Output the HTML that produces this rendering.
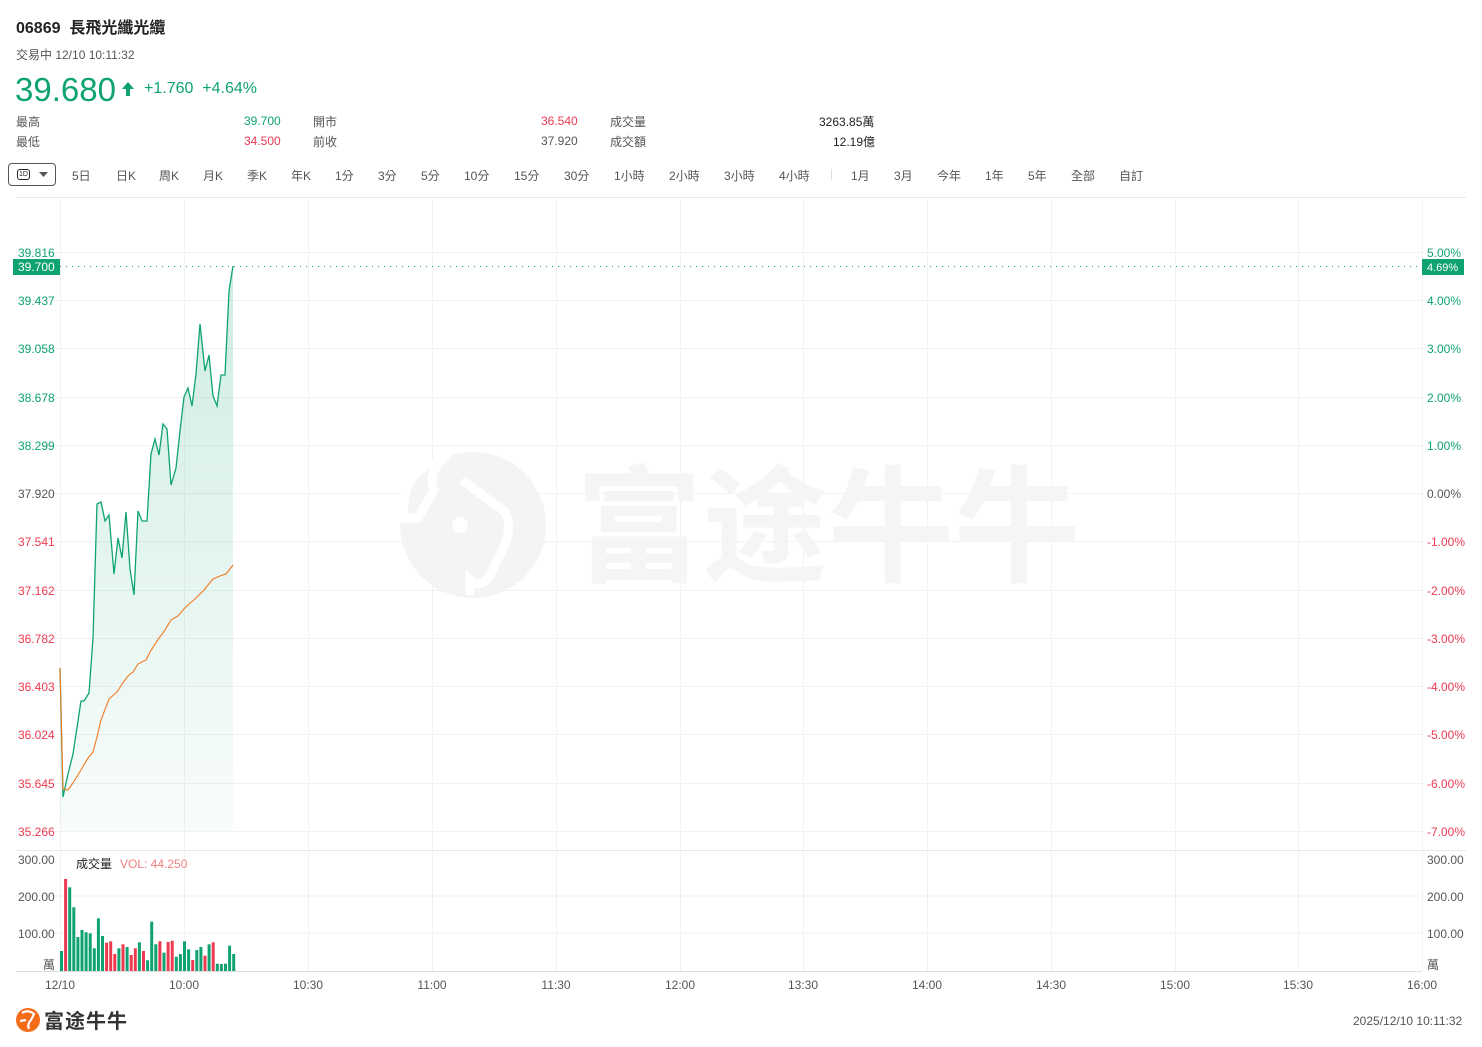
<!DOCTYPE html>
<html><head><meta charset="utf-8"><style>
*{margin:0;padding:0;box-sizing:border-box}
body{width:1482px;height:1047px;background:#fff;font-family:"Liberation Sans","Noto Sans CJK TC",sans-serif;position:relative;overflow:hidden;color:#333}
.a{position:absolute;white-space:nowrap}
.s{font-size:12px;color:#555}
.g{color:#0ea371}.r{color:#ec3a50}
.tb{position:absolute;top:167px;font-size:12px;color:#555}
</style></head><body>
<div class="a" style="left:16px;top:14px;font-size:16px;font-weight:bold;color:#222">06869&nbsp; 長飛光纖光纜</div>
<div class="a s" style="left:16px;top:46px">交易中 12/10 10:11:32</div>
<div class="a g" style="left:15px;top:70px;font-size:33px;line-height:40px">39.680</div>
<svg class="a" style="left:121px;top:81px" width="14" height="16"><path d="M7 1 L13 8 H9 V15 H5 V8 H1 Z" fill="#0ea371"/></svg>
<div class="a g" style="left:144px;top:80px;font-size:16px">+1.760&nbsp;&nbsp;+4.64%</div>
<div class="a s" style="left:16px;top:113px">最高</div>
<div class="a s" style="left:16px;top:133px">最低</div>
<div class="a s g" style="left:244px;top:114px;color:#0ea371">39.700</div>
<div class="a s" style="left:244px;top:134px;color:#ec3a50">34.500</div>
<div class="a s" style="left:313px;top:113px">開市</div>
<div class="a s" style="left:313px;top:133px">前收</div>
<div class="a s" style="left:541px;top:114px;color:#ec3a50">36.540</div>
<div class="a s" style="left:541px;top:134px">37.920</div>
<div class="a s" style="left:610px;top:113px">成交量</div>
<div class="a s" style="left:610px;top:133px">成交額</div>
<div class="a s" style="left:819px;top:113px;color:#222">3263.85萬</div>
<div class="a s" style="left:833px;top:133px;color:#222">12.19億</div>
<div class="a" style="left:8px;top:163px;width:48px;height:23px;border:1px solid #555;border-radius:4px"></div>
<div class="a" style="left:17px;top:169px;width:13px;height:11px;border:1px solid #222;border-radius:3px;font-size:7px;line-height:9px;text-align:center;color:#222">1D</div>
<svg class="a" style="left:39px;top:172px" width="9" height="6"><path d="M0 0H9L4.5 5Z" fill="#555"/></svg>
<div class="tb" style="left:72px">5日</div><div class="tb" style="left:116px">日K</div><div class="tb" style="left:159px">周K</div><div class="tb" style="left:203px">月K</div><div class="tb" style="left:247px">季K</div><div class="tb" style="left:291px">年K</div><div class="tb" style="left:335px">1分</div><div class="tb" style="left:378px">3分</div><div class="tb" style="left:421px">5分</div><div class="tb" style="left:464px">10分</div><div class="tb" style="left:514px">15分</div><div class="tb" style="left:564px">30分</div><div class="tb" style="left:614px">1小時</div><div class="tb" style="left:669px">2小時</div><div class="tb" style="left:724px">3小時</div><div class="tb" style="left:779px">4小時</div>
<div class="a" style="left:831px;top:169px;width:1px;height:11px;background:#ddd"></div>
<div class="tb" style="left:851px">1月</div><div class="tb" style="left:894px">3月</div><div class="tb" style="left:937px">今年</div><div class="tb" style="left:985px">1年</div><div class="tb" style="left:1028px">5年</div><div class="tb" style="left:1071px">全部</div><div class="tb" style="left:1119px">自訂</div>

<svg class="a" style="left:0;top:0" width="1482" height="1047" id="ch">
<defs><linearGradient id="gf" x1="0" y1="0" x2="0" y2="1"><stop offset="0" stop-color="#0ea371" stop-opacity=".2"/><stop offset="1" stop-color="#0ea371" stop-opacity=".03"/></linearGradient></defs>
<line x1="16" y1="197.5" x2="1466" y2="197.5" stroke="#e8e8e8"/>
<line x1="16" y1="850.5" x2="1466" y2="850.5" stroke="#e8e8e8"/>
<line x1="16" y1="971.5" x2="1422" y2="971.5" stroke="#ddd"/>
<g stroke="#f2f2f2" id="grid"></g>
<g fill="#f4f4f4" opacity="1">
<ellipse cx="473" cy="525" rx="73" ry="73"/>
<text x="576" y="572" font-size="126" font-family="Noto Sans CJK SC,sans-serif" font-weight="bold" fill="#f5f5f5">富途牛牛</text>
</g>
<path d="M418 518 L404 518 Q400 470 440 462 Q428 475 434 490 Z M462 480 L505 512 Q512 525 505 545 L490 575 Q480 590 470 580 L470 595" fill="none" stroke="#fff" stroke-width="9"/>
<circle cx="460" cy="525" r="8" fill="#fff"/>
<line x1="60" y1="266.5" x2="1422" y2="266.5" stroke="#0ea371" stroke-dasharray="1 5"/>
<path id="fill" fill="url(#gf)"/>
<polyline id="pl" fill="none" stroke="#0ea371" stroke-width="1.3"/>
<polyline id="ol" fill="none" stroke="#f07a22" stroke-width="1.1"/>
<g id="bars"></g>
<rect x="13" y="259" width="47" height="16" fill="#0ea371"/>
<text x="18" y="271" font-size="12" fill="#fff">39.700</text>
<rect x="1422" y="259" width="42" height="16" fill="#0ea371"/>
<text x="1427" y="271" font-size="11" fill="#fff">4.69%</text>
<g font-size="12" id="lab"></g>
<text x="76" y="868" font-size="12" fill="#222">成交量</text>
<text x="120" y="868" font-size="12" fill="#f08080">VOL: 44.250</text>
<g font-size="12" fill="#555">
<text x="18" y="864">300.00</text><text x="18" y="901">200.00</text><text x="18" y="938">100.00</text><text x="43" y="969">萬</text>
<text x="1427" y="864">300.00</text><text x="1427" y="901">200.00</text><text x="1427" y="938">100.00</text><text x="1427" y="969">萬</text>
<text x="1353" y="1025">2025/12/10 10:11:32</text>
</g>
<g font-size="12" fill="#555" text-anchor="middle" id="tl"></g>
<circle cx="28" cy="1020" r="12" fill="#f56b18"/>
<path d="M22 1013 Q28 1009 34 1014 L31 1020 Q27 1024 29 1029 M20 1021 L26 1020" fill="none" stroke="#fff" stroke-width="2.2"/>
<text x="44" y="1028" font-size="20" font-weight="bold" fill="#333" font-family="Noto Sans CJK SC,sans-serif" textLength="83">富途牛牛</text>
</svg>
<script>
var ns="http://www.w3.org/2000/svg",svg=document.getElementById('ch');
function el(p,t,a,tx){var e=document.createElementNS(ns,t);for(var k in a)e.setAttribute(k,a[k]);if(tx)e.textContent=tx;document.getElementById(p).appendChild(e);}
var xs=[60,184,308,432,556,680,803,927,1051,1175,1298,1422];
xs.forEach(function(x){el('grid','line',{x1:x+.5,y1:198,x2:x+.5,y2:971});});
var ly=[252,300,348,397,445,493,541,590,638,686,734,783,831];
var lv=["39.816","39.437","39.058","38.678","38.299","37.920","37.541","37.162","36.782","36.403","36.024","35.645","35.266"];
var rv=["5.00%","4.00%","3.00%","2.00%","1.00%","0.00%","-1.00%","-2.00%","-3.00%","-4.00%","-5.00%","-6.00%","-7.00%"];
ly.forEach(function(y,i){var c=i<5?'#0ea371':(i==5?'#555':'#ec3a50');
 el('grid','line',{x1:16,y1:y+.5,x2:1422,y2:y+.5});
 el('lab','text',{x:18,y:y+5,fill:c},lv[i]);el('lab','text',{x:1427,y:y+5,fill:c},rv[i]);});
[896,933].forEach(function(y){el('grid','line',{x1:16,y1:y,x2:1422,y2:y});});
var tls=["12/10","10:00","10:30","11:00","11:30","12:00","13:30","14:00","14:30","15:00","15:30","16:00"];
xs.forEach(function(x,i){el('tl','text',{x:i==0?60:x,y:989},tls[i]);});
var P=[[60,668],[63,797],[68,774],[73,754],[81,701],[84,701],[89,693],[93,638],[97,504],[101,502],[105,521],[109,515],[114,574],[118,538],[122,558],[126,512],[130,569],[134,595],[138,511],[142,521],[147,521],[151,454],[155,439],[159,455],[163,424],[167,429],[171,485],[176,468],[180,431],[184,397],[188,388],[192,406],[196,374],[200,324],[205,371],[209,355],[213,396],[217,406],[221,375],[225,375],[229,291],[233,266]];
var s=P.map(function(p){return p.join(',')}).join(' ');
document.getElementById('pl').setAttribute('points',s);
document.getElementById('fill').setAttribute('d','M'+s.replace(/ /g,' L')+' L233,831 L60,831 Z');
var O=[[60,668],[63,789],[68,790],[73,783],[81,770],[88,758],[93,752],[97,737],[101,720],[109,699],[117,692],[122,684],[128,676],[133,672],[138,664],[146,660],[150,652],[159,638],[163,633],[171,620],[178,616],[183,610],[189,604],[195,599],[204,590],[213,579],[220,576],[226,574],[233,565]];
document.getElementById('ol').setAttribute('points',O.map(function(p){return p.join(',')}).join(' '));
var B="g318 r102 g127 g187 g276 g255 g262 g265 g310 g220 g273 r293 r289 r327 g310 r298 g306 r330 r310 g292 r318 g346 g230 g298 r289 g323 r291 r287 g335 g327 g289 g313 r345 g315 g306 r332 g298 r292 g356 g357 g356 g302 g327".split(' ');
B.forEach(function(b,i){var top=845+parseInt(b.slice(1))/3;var x=60+i*4.1;
 el('bars','rect',{x:x.toFixed(1),y:top.toFixed(1),width:3,height:(971-top).toFixed(1),fill:b[0]=='g'?'#0ea371':'#ec3a50'});});
</script>
</body></html>
